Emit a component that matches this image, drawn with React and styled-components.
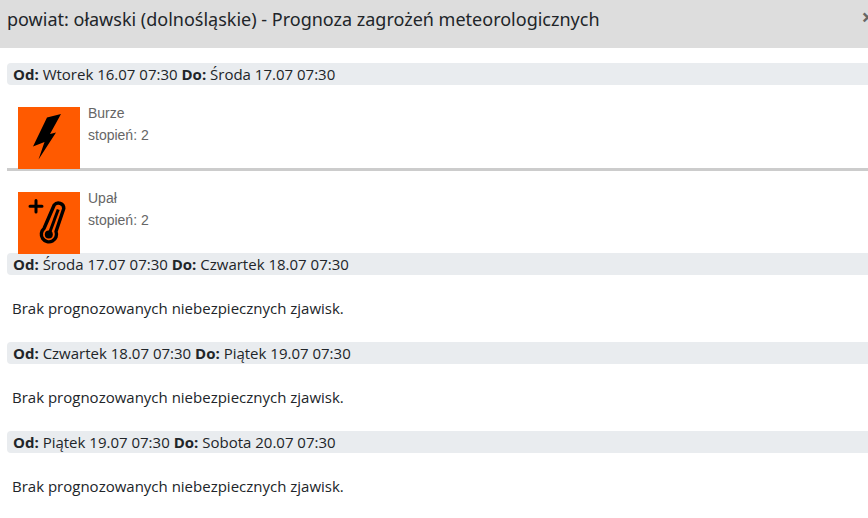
import React from 'react';
import styled, { createGlobalStyle } from 'styled-components';

const GlobalStyle = createGlobalStyle`
  body {
    margin: 0;
    background-color: #fff;
    color: #212529;
    font-family: "Open Sans", "Noto Sans", sans-serif;
    font-size: 15px;
    line-height: 22px;
  }
`;

const Dialog = styled.div`
  overflow: hidden;
`;

const Header = styled.header`
  display: flex;
  justify-content: space-between;
  align-items: flex-start;
  padding: 7px 0 17px 7px;
  background-color: #ddd;
`;

const Title = styled.h1`
  margin: 0;
  font-family: "Noto Sans", "Open Sans", sans-serif;
  font-size: 18px;
  font-weight: 400;
  line-height: 24px;
`;

const CloseButton = styled.button`
  margin: 0 -6px 0 0;
  padding: 0;
  border: 0;
  background: none;
  color: #666;
  font-family: "Open Sans", sans-serif;
  font-size: 22px;
  font-weight: 700;
  line-height: 18px;
  cursor: pointer;
`;

const Body = styled.main`
  padding: 15px 0 9px 7px;
`;

const PeriodBar = styled.h2`
  margin: 0 0 1px;
  padding-left: 6px;
  border-radius: 4px 0 0 4px;
  background-color: #e9ecef;
  font-size: 15px;
  font-weight: 400;
  line-height: 22px;
`;

const Empty = styled.p`
  margin: 0;
  padding: 21px 5px 23px;
`;

const Warning = styled.article`
  display: flex;
  gap: 8px;
  padding: 16px 11px 22px;

  & + & {
    border-top: 3px solid #ccc;
  }
`;

const WarningIcon = styled.svg`
  flex: none;
  position: relative;
  width: 62px;
  height: 62px;
  margin: 5px 0 -24px;
  background-color: #ff5a00;
`;

const WarningText = styled.div`
  color: #666;
  font-family: "Liberation Sans", Arial, sans-serif;
  font-size: 14px;
  line-height: 22px;
`;

function StormIcon() {
  return (
    <WarningIcon viewBox="0 0 62 62" aria-hidden="true">
      <path d="M29 10.5 L43 7 L32 27 L38 25.5 L20.5 52.5 L26.5 35 L15 39.5 Z" />
    </WarningIcon>
  );
}

function HeatIcon() {
  return (
    <WarningIcon viewBox="0 0 62 62" fill="none" stroke="#000" strokeLinecap="round" aria-hidden="true">
      <path d="M18 8.5 V20 M12 14.2 H24" strokeWidth="3" />
      <path d="M36.2 13 A5.4 5.4 0 0 1 45.8 16.5 L38 39.5 A7.6 7.6 0 1 1 26 36.5 Z" strokeWidth="3.4" strokeLinejoin="round" />
      <path d="M40.2 17.5 L31.5 41" strokeWidth="3" strokeLinecap="butt" />
      <circle cx="30.8" cy="42.5" r="4" fill="#000" stroke="none" />
    </WarningIcon>
  );
}

const periods = [
  {
    from: 'Wtorek 16.07 07:30',
    to: 'Środa 17.07 07:30',
    warnings: [
      { name: 'Burze', level: 2, Icon: StormIcon },
      { name: 'Upał', level: 2, Icon: HeatIcon },
    ],
  },
  { from: 'Środa 17.07 07:30', to: 'Czwartek 18.07 07:30', warnings: [] },
  { from: 'Czwartek 18.07 07:30', to: 'Piątek 19.07 07:30', warnings: [] },
  { from: 'Piątek 19.07 07:30', to: 'Sobota 20.07 07:30', warnings: [] },
];

function Period({ from, to, warnings }) {
  return (
    <section>
      <PeriodBar>
        <b>Od:</b> {from} <b>Do:</b> {to}
      </PeriodBar>
      {warnings.length === 0 && <Empty>Brak prognozowanych niebezpiecznych zjawisk.</Empty>}
      {warnings.map(({ name, level, Icon }) => (
        <Warning key={name}>
          <Icon />
          <WarningText>
            <div>{name}</div>
            <div>{`stopień: ${level}`}</div>
          </WarningText>
        </Warning>
      ))}
    </section>
  );
}

export default function App() {
  return (
    <Dialog>
      <GlobalStyle />
      <Header>
        <Title>powiat: oławski (dolnośląskie) - Prognoza zagrożeń meteorologicznych</Title>
        <CloseButton type="button" aria-label="Zamknij">×</CloseButton>
      </Header>
      <Body>
        {periods.map((period) => <Period key={period.from} {...period} />)}
      </Body>
    </Dialog>
  );
}
